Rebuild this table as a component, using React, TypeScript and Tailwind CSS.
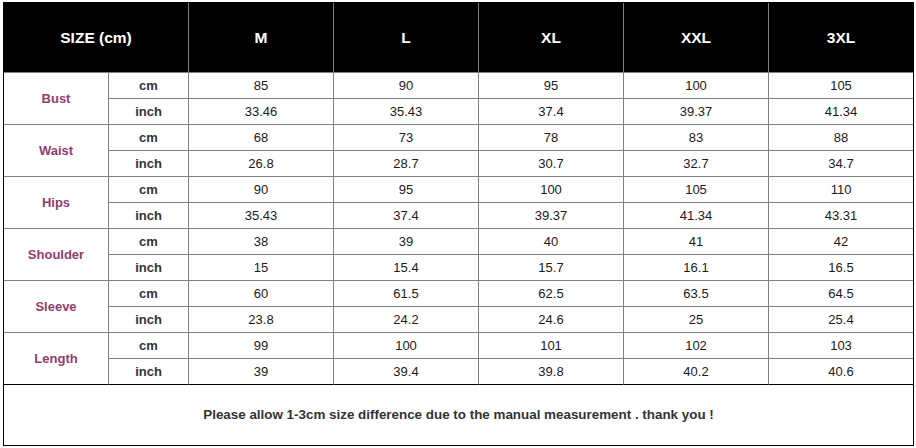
import React from 'react';

// ─── Data ─────────────────────────────────────────────────────────────────────
const SIZES = ['M', 'L', 'XL', 'XXL', '3XL'];

const ROWS: { label: string; cm: string[]; inch: string[] }[] = [
  { label: 'Bust', cm: ['85', '90', '95', '100', '105'], inch: ['33.46', '35.43', '37.4', '39.37', '41.34'] },
  { label: 'Waist', cm: ['68', '73', '78', '83', '88'], inch: ['26.8', '28.7', '30.7', '32.7', '34.7'] },
  { label: 'Hips', cm: ['90', '95', '100', '105', '110'], inch: ['35.43', '37.4', '39.37', '41.34', '43.31'] },
  { label: 'Shoulder', cm: ['38', '39', '40', '41', '42'], inch: ['15', '15.4', '15.7', '16.1', '16.5'] },
  { label: 'Sleeve', cm: ['60', '61.5', '62.5', '63.5', '64.5'], inch: ['23.8', '24.2', '24.6', '25', '25.4'] },
  { label: 'Length', cm: ['99', '100', '101', '102', '103'], inch: ['39', '39.4', '39.8', '40.2', '40.6'] },
];

const FONT = "font-['Liberation_Sans',Arial,sans-serif]";

export default function App() {
  return (
    <div className={`w-[916px] h-[448px] bg-white pt-[2px] pl-[3px] ${FONT}`}>
      <table className="table-fixed border-separate border-spacing-0 border border-black w-[911px]">
        <colgroup>
          <col className="w-[105px]" />
          <col className="w-[80px]" />
          <col className="w-[145px]" />
          <col className="w-[145px]" />
          <col className="w-[145px]" />
          <col className="w-[145px]" />
          <col className="w-[144px]" />
        </colgroup>
        <thead>
          <tr>
            <th
              colSpan={2}
              className="h-[70px] p-0 bg-black text-white text-[15.5px] font-bold text-center border-r border-b border-[#808080]"
            >
              SIZE (cm)
            </th>
            {SIZES.map((s, i) => (
              <th
                key={s}
                className={`h-[70px] p-0 bg-black text-white text-[15.5px] font-bold text-center border-b border-[#808080] ${
                  i < SIZES.length - 1 ? 'border-r' : ''
                }`}
              >
                {s}
              </th>
            ))}
          </tr>
        </thead>
        <tbody>
          {ROWS.map((row, gi) => {
            const last = gi === ROWS.length - 1;
            const groupBottom = last ? 'border-b border-b-black' : 'border-b border-b-[#808080]';
            return (
              <React.Fragment key={row.label}>
                <tr>
                  <td
                    rowSpan={2}
                    className={`p-0 text-center text-[13px] font-bold text-[#923c72] border-r border-r-[#808080] ${groupBottom}`}
                  >
                    {row.label}
                  </td>
                  <td className="h-[26px] p-0 text-center text-[13px] font-bold text-[#333] border-r border-b border-[#808080]">
                    cm
                  </td>
                  {row.cm.map((v, i) => (
                    <td
                      key={i}
                      className={`h-[26px] p-0 text-center text-[13px] text-[#1a1a1a] border-b border-[#808080] ${
                        i < 4 ? 'border-r' : ''
                      }`}
                    >
                      {v}
                    </td>
                  ))}
                </tr>
                <tr>
                  <td
                    className={`h-[26px] p-0 text-center text-[13px] font-bold text-[#333] border-r border-r-[#808080] ${groupBottom}`}
                  >
                    inch
                  </td>
                  {row.inch.map((v, i) => (
                    <td
                      key={i}
                      className={`h-[26px] p-0 text-center text-[13px] text-[#1a1a1a] ${groupBottom} ${
                        i < 4 ? 'border-r border-r-[#808080]' : ''
                      }`}
                    >
                      {v}
                    </td>
                  ))}
                </tr>
              </React.Fragment>
            );
          })}
          <tr>
            <td colSpan={7} className="h-[60px] p-0 text-center text-[13.4px] font-bold text-[#333]">
              Please allow 1-3cm size difference due to the manual measurement . thank you !
            </td>
          </tr>
        </tbody>
      </table>
    </div>
  );
}
